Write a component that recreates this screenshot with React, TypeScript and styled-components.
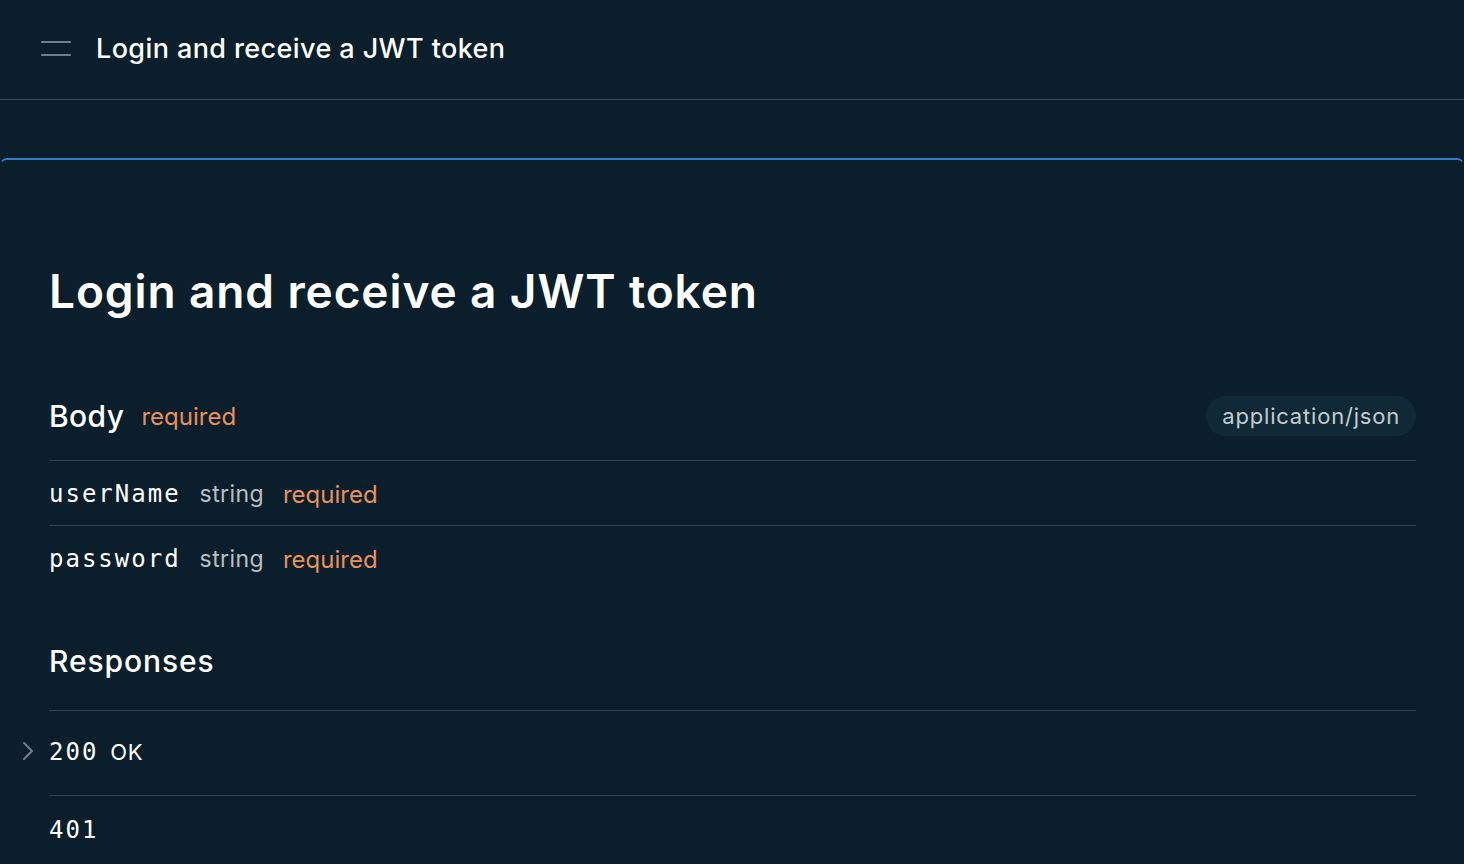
import React from "react";
import styled, { createGlobalStyle } from "styled-components";

const Global = createGlobalStyle`
  html, body { margin: 0; padding: 0; background: #0a1f2b; }
  body { font-family: Inter, "Noto Sans", sans-serif; color: #ffffff; -webkit-font-smoothing: antialiased; }
  * { box-sizing: border-box; }
`;

const Page = styled.div`
  min-height: 864px;
  background: #0a1f2b;
  overflow: hidden;
`;

const Header = styled.header`
  height: 100px;
  display: flex;
  align-items: center;
  gap: 25px;
  padding: 0 0 2px 41px;
  border-bottom: 1px solid #3a4a53;
`;

const MenuButton = styled.div`
  width: 30px;
  display: flex;
  flex-direction: column;
  gap: 11px;
  span {
    display: block;
    height: 2px;
    border-radius: 1px;
    background: #6f8089;
  }
`;

const HeaderTitle = styled.h1`
  margin: 0;
  font-size: 27px;
  font-weight: 500;
  color: #ffffff;
  letter-spacing: 0.4px;
`;

const Card = styled.section`
  margin-top: 58px;
  border-top: 2px solid #3478c6;
  border-left: 1px solid transparent;
  border-right: 1px solid transparent;
  border-radius: 7px 7px 0 0;
  padding: 104px 47px 40px 48px;
`;

const Title = styled.h2`
  margin: 0 0 78px;
  font-size: 46px;
  line-height: 54px;
  font-weight: 600;
  letter-spacing: 0.9px;
`;

const SectionHead = styled.div`
  display: flex;
  align-items: center;
  gap: 17px;
  height: 40px;
  margin-top: 1px;
`;

const SectionTitle = styled.h3<{ $spacing?: number }>`
  margin: 0;
  font-size: 30px;
  font-weight: 500;
  line-height: 40px;
  letter-spacing: ${(p) => p.$spacing ?? 0.5}px;
`;

const Required = styled.span`
  color: #e8915a;
  font-size: 24px;
`;

const Pill = styled.span`
  margin-left: auto;
  height: 40px;
  display: flex;
  align-items: center;
  padding: 0 16px;
  border-radius: 20px;
  background: #0f2a36;
  color: #c4ccd0;
  font-size: 22px;
  letter-spacing: 0.8px;
`;

const FieldList = styled.div`
  margin-top: 24px;
  border-top: 1px solid #34454f;
`;

const FieldRow = styled.div<{ $last?: boolean }>`
  display: flex;
  align-items: center;
  gap: 19px;
  height: 65px;
  padding-top: 2px;
  border-bottom: 1px solid ${(p) => (p.$last ? "transparent" : "#34454f")};
`;

const Mono = styled.span`
  font-family: "DejaVu Sans Mono", "Liberation Mono", monospace;
  font-size: 24px;
  letter-spacing: 2px;
  color: #ffffff;
`;

const TypeLabel = styled.span`
  color: #b8c0c4;
  font-size: 23px;
  letter-spacing: 0.4px;
`;

const Responses = styled.div`
  margin-top: 50px;
`;

const ResponseList = styled.div`
  margin-top: 29px;
  border-top: 1px solid #34454f;
`;

const ResponseRow = styled.div<{ $h: number; $last?: boolean }>`
  position: relative;
  display: flex;
  align-items: center;
  gap: 12px;
  height: ${(p) => p.$h}px;
  padding-bottom: 3px;
  border-bottom: 1px solid ${(p) => (p.$last ? "transparent" : "#34454f")};
`;

const Chevron = styled.svg`
  position: absolute;
  left: -28px;
  top: 50%;
  width: 14px;
  height: 22px;
  margin-top: -13px;
`;

const StatusText = styled.span`
  font-size: 22px;
  color: #ffffff;
  letter-spacing: 0.5px;
`;

export default function App() {
  return (
    <Page>
      <Global />
      <Header>
        <MenuButton>
          <span />
          <span />
        </MenuButton>
        <HeaderTitle>Login and receive a JWT token</HeaderTitle>
      </Header>
      <Card>
        <Title>Login and receive a JWT token</Title>
        <SectionHead>
          <SectionTitle $spacing={0.4}>Body</SectionTitle>
          <Required>required</Required>
          <Pill>application/json</Pill>
        </SectionHead>
        <FieldList>
          <FieldRow>
            <Mono>userName</Mono>
            <TypeLabel>string</TypeLabel>
            <Required>required</Required>
          </FieldRow>
          <FieldRow $last>
            <Mono>password</Mono>
            <TypeLabel>string</TypeLabel>
            <Required>required</Required>
          </FieldRow>
        </FieldList>
        <Responses>
          <SectionTitle $spacing={0.9}>Responses</SectionTitle>
          <ResponseList>
            <ResponseRow $h={85}>
              <Chevron viewBox="0 0 14 22" fill="none">
                <path d="M3 3 L11 11 L3 19" stroke="#6f8089" strokeWidth="2" strokeLinecap="round" strokeLinejoin="round" />
              </Chevron>
              <Mono>200</Mono>
              <StatusText>OK</StatusText>
            </ResponseRow>
            <ResponseRow $h={71} $last>
              <Mono>401</Mono>
            </ResponseRow>
          </ResponseList>
        </Responses>
      </Card>
    </Page>
  );
}
